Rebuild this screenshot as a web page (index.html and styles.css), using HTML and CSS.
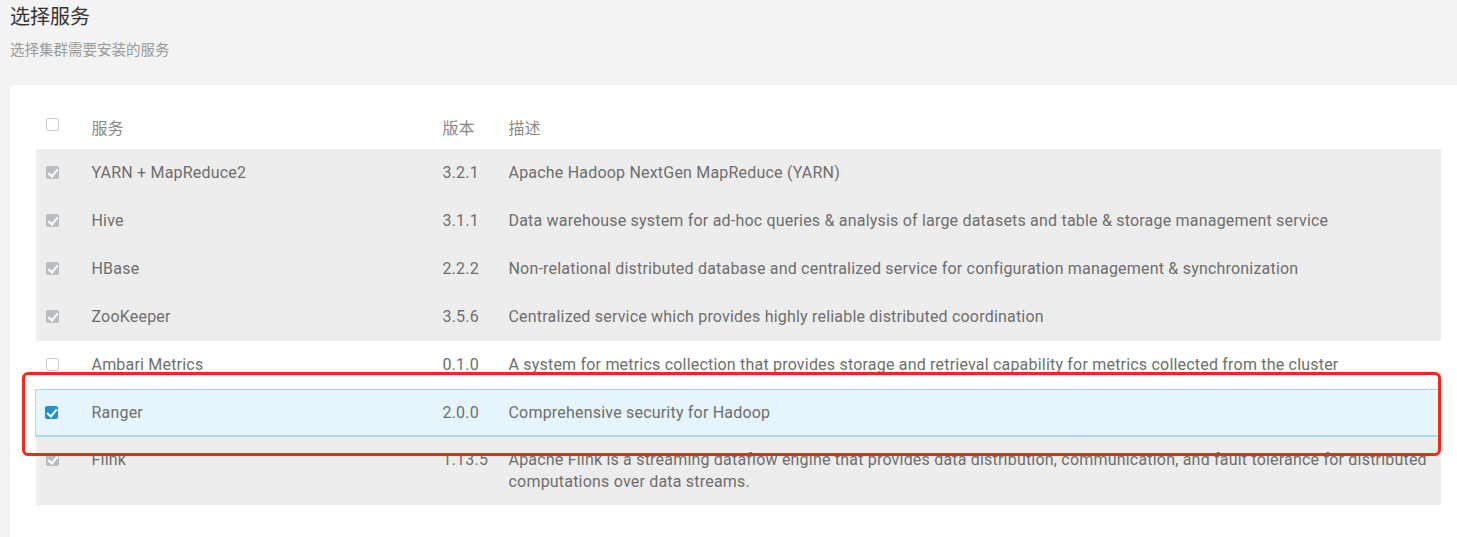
FILE: index.html
```html
<!DOCTYPE html>
<html lang="zh">
<head>
<meta charset="utf-8">
<link rel="stylesheet" href="styles.css">
</head>
<body>
<div class="page">
  <h2 class="title">选择服务</h2>
  <p class="subtitle">选择集群需要安装的服务</p>
  <div class="panel">
    <div class="table-wrap">
      <table class="services">
        <colgroup>
          <col class="c-check"><col class="c-name"><col class="c-ver"><col class="c-desc">
        </colgroup>
        <thead>
          <tr>
            <th><span class="cb cb-head"></span></th>
            <th>服务</th>
            <th>版本</th>
            <th>描述</th>
          </tr>
        </thead>
        <tbody>
          <tr class="installed">
            <td><span class="cb cb-disabled"></span></td>
            <td>YARN + MapReduce2</td><td>3.2.1</td>
            <td>Apache Hadoop NextGen MapReduce (YARN)</td>
          </tr>
          <tr class="installed">
            <td><span class="cb cb-disabled"></span></td>
            <td>Hive</td><td>3.1.1</td>
            <td>Data warehouse system for ad-hoc queries &amp; analysis of large datasets and table &amp; storage management service</td>
          </tr>
          <tr class="installed">
            <td><span class="cb cb-disabled"></span></td>
            <td>HBase</td><td>2.2.2</td>
            <td>Non-relational distributed database and centralized service for configuration management &amp; synchronization</td>
          </tr>
          <tr class="installed">
            <td><span class="cb cb-disabled"></span></td>
            <td>ZooKeeper</td><td>3.5.6</td>
            <td>Centralized service which provides highly reliable distributed coordination</td>
          </tr>
          <tr>
            <td><span class="cb"></span></td>
            <td>Ambari Metrics</td><td>0.1.0</td>
            <td>A system for metrics collection that provides storage and retrieval capability for metrics collected from the cluster</td>
          </tr>
          <tr class="selected">
            <td><span class="cb cb-checked"></span></td>
            <td>Ranger</td><td>2.0.0</td>
            <td>Comprehensive security for Hadoop</td>
          </tr>
          <tr class="installed last">
            <td><span class="cb cb-disabled"></span></td>
            <td>Flink</td><td>1.13.5</td>
            <td>Apache Flink is a streaming dataflow engine that provides data distribution, communication, and fault tolerance for distributed computations over data streams.</td>
          </tr>
        </tbody>
      </table>
      <div class="highlight-box"></div>
    </div>
  </div>
</div>
</body>
</html>
```

FILE: styles.css
```css
html, body {
  margin: 0;
  padding: 0;
  background: #f3f3f3;
}
body {
  font-family: Roboto, "Noto Sans CJK SC", sans-serif;
  color: #666;
  overflow: hidden;
}
.page {
  padding: 0 0 0 10px;
}
.title {
  margin: 0;
  padding-top: 5px;
  font-size: 20px;
  font-weight: 400;
  line-height: 24px;
  color: #333;
}
.subtitle {
  margin: 13px 0 0;
  font-size: 14.5px;
  line-height: 18px;
  color: #999;
}
.panel {
  margin-top: 25px;
  background: #fff;
  border-radius: 4px 0 0 0;
  padding: 20px 16px 40px 25px;
}
.table-wrap {
  position: relative;
}
.services {
  width: 100%;
  border-collapse: collapse;
  table-layout: fixed;
  font-size: 16px;
  letter-spacing: 0.2px;
}
.c-check { width: 46px; }
.c-name { width: 351px; }
.c-ver { width: 66px; }
.services th {
  text-align: left;
  font-weight: 400;
  font-size: 16px;
  letter-spacing: 0;
  color: #888;
  height: 44px;
  padding: 0 10px;
  vertical-align: middle;
}
.services td {
  padding: 13px 10px;
  line-height: 22px;
  vertical-align: top;
  color: #6e6e6e;
}
.services tr.last td {
  padding-top: 12px;
  padding-bottom: 12px;
}
.services th:first-child,
.services td:first-child {
  padding-left: 10px;
  padding-right: 0;
}
.services tr.installed td {
  background: #ededed;
}
.services tr.selected td {
  background: #e6f4fb;
  border-top: 1px solid #a9dbe9;
  border-bottom: 2px solid #a9dbe9;
  padding-top: 12px;
  padding-bottom: 11px;
}
.services tr.selected td:first-child {
  border-left: 1px solid #a9dbe9;
  padding-left: 9px;
}
.cb {
  display: inline-block;
  box-sizing: border-box;
  width: 13px;
  height: 13px;
  border: 1px solid #ccc;
  border-radius: 2px;
  background: #fff;
  vertical-align: middle;
  position: relative;
  top: -2px;
}
.cb-head {
  top: -4px;
}
.services td .cb {
  top: 4px;
  vertical-align: top;
}
.cb-disabled,
.cb-checked {
  border: none;
}
.cb-disabled { background: #b8bdc4; }
.cb-checked { background: #1e8fd0; }
.cb-disabled::after,
.cb-checked::after {
  content: "";
  position: absolute;
  left: 4px;
  top: 1px;
  width: 4px;
  height: 8px;
  border: solid #fff;
  border-width: 0 2px 2px 0;
  transform: rotate(40deg);
}
.highlight-box {
  position: absolute;
  left: -13px;
  top: 267px;
  width: 1419px;
  height: 84px;
  box-sizing: border-box;
  border: 3px solid #ff2418;
  border-radius: 6px;
  pointer-events: none;
}
```
